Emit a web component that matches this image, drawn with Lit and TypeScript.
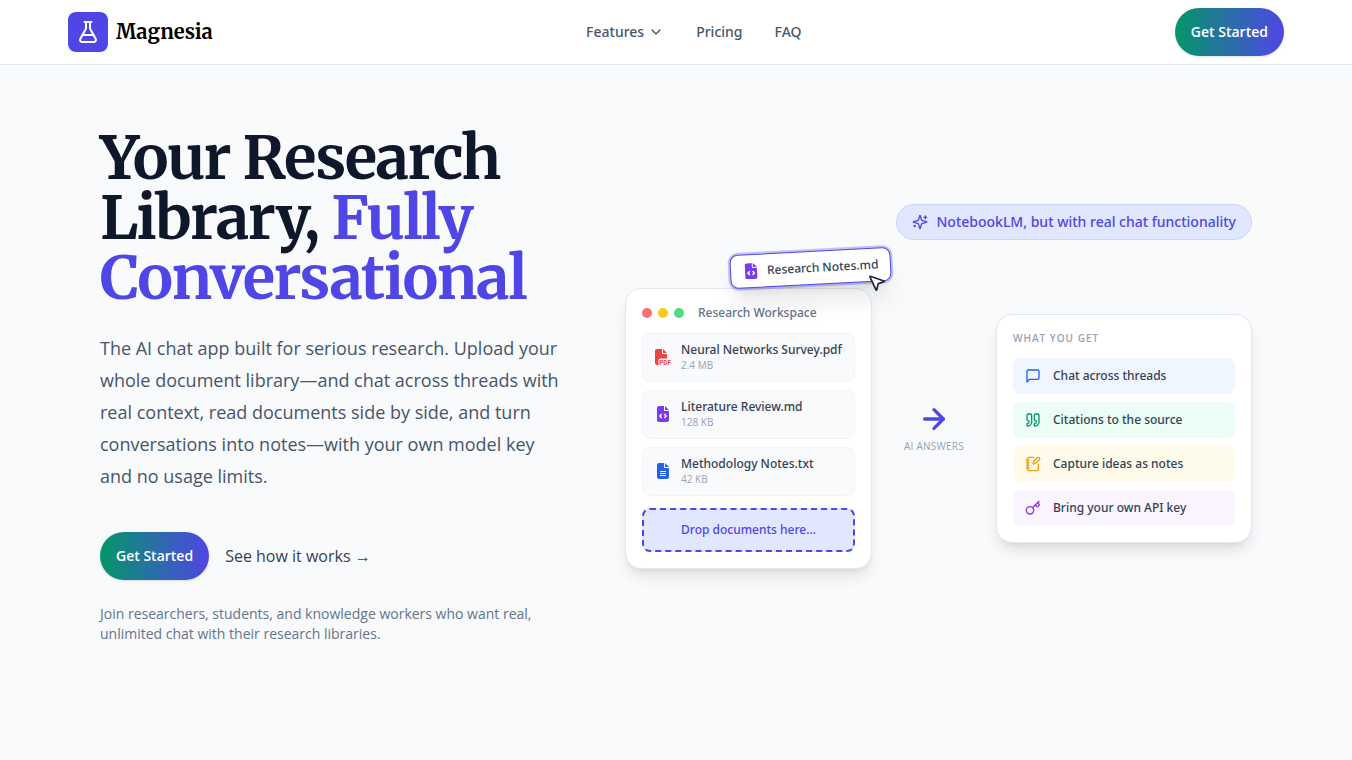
import { LitElement, html, svg, css } from "lit";
import { customElement } from "lit/decorators.js";

const stroke = (body: unknown, cls = "") => html`
  <svg class="icon ${cls}" viewBox="0 0 24 24" fill="none" stroke="currentColor" stroke-width="2"
    stroke-linecap="round" stroke-linejoin="round" aria-hidden="true">${body}</svg>`;

const flask = svg`<path d="M14 2v6a2 2 0 0 0 .245.96l5.51 10.08A2 2 0 0 1 18 22H6a2 2 0 0 1-1.755-2.96l5.51-10.08A2 2 0 0 0 10 8V2"/><path d="M6.453 15h11.094"/><path d="M8.5 2h7"/>`;
const chevron = svg`<path d="m6 9 6 6 6-6"/>`;
const sparkles = svg`<path d="M9.937 15.5A2 2 0 0 0 8.5 14.063l-6.135-1.582a.5.5 0 0 1 0-.962L8.5 9.936A2 2 0 0 0 9.937 8.5l1.582-6.135a.5.5 0 0 1 .963 0L14.063 8.5A2 2 0 0 0 15.5 9.937l6.135 1.581a.5.5 0 0 1 0 .964L15.5 14.063a2 2 0 0 0-1.437 1.437l-1.582 6.135a.5.5 0 0 1-.963 0z"/><path d="M20 3v4"/><path d="M22 5h-4"/><path d="M4 17v2"/><path d="M5 18H3"/>`;
const message = svg`<path d="M21 15a2 2 0 0 1-2 2H7l-4 4V5a2 2 0 0 1 2-2h14a2 2 0 0 1 2 2z"/>`;
const quote = svg`<path d="M16 3a2 2 0 0 0-2 2v6a2 2 0 0 0 2 2 1 1 0 0 1 1 1v1a2 2 0 0 1-2 2 1 1 0 0 0-1 1v2a1 1 0 0 0 1 1 6 6 0 0 0 6-6V5a2 2 0 0 0-2-2z"/><path d="M5 3a2 2 0 0 0-2 2v6a2 2 0 0 0 2 2 1 1 0 0 1 1 1v1a2 2 0 0 1-2 2 1 1 0 0 0-1 1v2a1 1 0 0 0 1 1 6 6 0 0 0 6-6V5a2 2 0 0 0-2-2z"/>`;
const notebook = svg`<path d="M13.4 2H6a2 2 0 0 0-2 2v16a2 2 0 0 0 2 2h12a2 2 0 0 0 2-2v-7.4"/><path d="M2 6h4"/><path d="M2 10h4"/><path d="M2 14h4"/><path d="M2 18h4"/><path d="M21.378 5.626a1 1 0 1 0-3.004-3.004l-5.01 5.012a2 2 0 0 0-.506.854l-.837 2.87a.5.5 0 0 0 .62.62l2.87-.837a2 2 0 0 0 .854-.506z"/>`;
const key = svg`<path d="m15.5 7.5 2.3 2.3a1 1 0 0 0 1.4 0l2.1-2.1a1 1 0 0 0 0-1.4L19 4"/><path d="m21 2-9.6 9.6"/><circle cx="7.5" cy="15.5" r="5.5"/>`;
const arrow = svg`<path d="M5 12h14"/><path d="m12 5 7 7-7 7"/>`;
const pointer = svg`<path d="M4.037 4.688a.495.495 0 0 1 .651-.651l16 6.5a.5.5 0 0 1-.063.947l-6.124 1.58a2 2 0 0 0-1.438 1.435l-1.579 6.126a.5.5 0 0 1-.947.063z"/>`;

const filePdf = html`<svg class="icon pdf" viewBox="0 0 512 512" fill="currentColor" aria-hidden="true">
  <path d="M0 64C0 28.7 28.7 0 64 0h160v128c0 17.7 14.3 32 32 32h128v144H176c-35.3 0-64 28.7-64 64v144H64c-35.3 0-64-28.7-64-64zM384 128H256V0z"/>
  <text class="pdf-mark" x="136" y="506">PDF</text></svg>`;
const PAGE = "M64 0C28.7 0 0 28.7 0 64v384c0 35.3 28.7 64 64 64h256c35.3 0 64-28.7 64-64V160H256c-17.7 0-32-14.3-32-32V0zM256 0v128h128z";
const fileCode = html`<svg class="icon md" viewBox="0 0 384 512" fill="currentColor" aria-hidden="true">
  <path fill-rule="evenodd" d="${PAGE}M153 289l-31 31 31 31c9.400 9.400 9.400 24.600 0 33.900s-24.600 9.400-33.900 0L71 337c-9.400-9.400-9.400-24.600 0-33.900l48-48c9.400-9.400 24.600-9.400 33.900 0s9.400 24.600 0 33.900zM265 255l48 48c9.400 9.400 9.400 24.600 0 33.900l-48 48c-9.400 9.400-24.600 9.400-33.900 0s-9.400-24.600 0-33.900l31-31-31-31c-9.400-9.400-9.400-24.600 0-33.900s24.600-9.400 33.900 0z"/></svg>`;
const fileLines = html`<svg class="icon txt" viewBox="0 0 384 512" fill="currentColor" aria-hidden="true">
  <path fill-rule="evenodd" d="${PAGE}M112 256h160c8.800 0 16 7.200 16 16s-7.200 16-16 16H112c-8.800 0-16-7.200-16-16s7.200-16 16-16zm0 64h160c8.800 0 16 7.200 16 16s-7.200 16-16 16H112c-8.800 0-16-7.200-16-16s7.200-16 16-16zm0 64h160c8.800 0 16 7.200 16 16s-7.200 16-16 16H112c-8.800 0-16-7.200-16-16s7.200-16 16-16z"/></svg>`;

const files = [
  { icon: filePdf, name: "Neural Networks Survey.pdf", size: "2.4 MB" },
  { icon: fileCode, name: "Literature Review.md", size: "128 KB" },
  { icon: fileLines, name: "Methodology Notes.txt", size: "42 KB" },
];

const benefits = [
  { icon: message, tone: "blue", text: "Chat across threads" },
  { icon: quote, tone: "green", text: "Citations to the source" },
  { icon: notebook, tone: "amber", text: "Capture ideas as notes" },
  { icon: key, tone: "purple", text: "Bring your own API key" },
];

@customElement("app-root")
export class AppRoot extends LitElement {
  static styles = css`
    :host {
      --medium: "Noto Sans", "Open Sans", sans-serif;
      display: block;
      min-height: 100vh;
      background: #f8fafc;
      color: #0f172a;
      font-family: "Open Sans", "Noto Sans", sans-serif;
      font-size: 16px;
      line-height: 24px;
    }
    * { box-sizing: border-box; margin: 0; }
    a { color: inherit; text-decoration: none; }
    ul { list-style: none; padding: 0; }
    .icon { display: block; width: 16px; height: 16px; flex: none; }

    .header { margin-bottom: -1px; background: #fff; border-bottom: 1px solid #e2e8f0; }
    .bar {
      display: flex; align-items: center; justify-content: space-between;
      max-width: 1280px; height: 64px; margin: 0 auto; padding: 0 32px;
    }
    .brand { display: flex; align-items: center; gap: 8px; color: #000; }
    .logo {
      display: grid; place-items: center; width: 40px; height: 40px;
      border-radius: 8px; background: #4f46e5; color: #fff;
    }
    .logo .icon { width: 24px; height: 24px; }
    .brand-name { font: 700 20px/28px "Merriweather", "Liberation Serif", serif; }
    .nav {
      display: flex; align-items: center; gap: 32px;
      font: 500 14px/20px var(--medium); color: #475569;
    }
    .menu {
      display: flex; align-items: center; gap: 4px; padding: 0; border: 0;
      background: none; color: inherit; font: inherit; cursor: pointer;
    }
    .cta {
      display: inline-flex; align-items: center; height: 48px; padding: 0 16px;
      border-radius: 24px; color: #fff; white-space: nowrap;
      background: linear-gradient(to right, #059669, #4f46e5);
      box-shadow: 0 1px 3px rgba(0, 0, 0, 0.1), 0 1px 2px -1px rgba(0, 0, 0, 0.1);
      font-size: 14px; font-weight: 600; line-height: 20px;
    }

    .hero {
      display: grid; grid-template-columns: minmax(0, 25fr) minmax(0, 34fr);
      align-items: center; gap: 64px;
      max-width: 1216px; margin: 0 auto; padding: 64px 32px;
    }
    .title {
      font: 700 60px/60px "Merriweather", "Liberation Serif", serif;
      letter-spacing: -0.025em;
    }
    .accent { color: #4f46e5; }
    .lead { margin-top: 24px; font-size: 18px; line-height: 32px; color: #475569; }
    .actions { display: flex; align-items: center; gap: 16px; margin-top: 40px; }
    .more { color: #334155; }
    .note { margin-top: 24px; font-size: 14px; line-height: 20px; color: #64748b; }

    .demo { display: flex; flex-direction: column; gap: 48px; }
    .pill {
      display: flex; align-items: center; gap: 8px; align-self: flex-end;
      padding: 7px 15px; border: 1px solid #cdd5fb; border-radius: 18px;
      background: #e0e7ff; color: #4f46e5; font: 500 14px/20px var(--medium);
    }
    .flow {
      display: grid; grid-template-columns: minmax(0, 1fr) auto 256px;
      align-items: center; gap: 32px;
    }
    .card {
      position: relative; padding: 16px; background: #fff;
      border: 1px solid #e2e8f0; border-radius: 16px;
      box-shadow: 0 10px 15px -3px rgba(0, 0, 0, 0.1), 0 4px 6px -4px rgba(0, 0, 0, 0.1);
      font: 500 12px/16px var(--medium);
    }
    .card-bar { display: flex; align-items: center; gap: 6px; margin-bottom: 12px; }
    .dot { width: 10px; height: 10px; border-radius: 50%; }
    .red { background: #f87171; }
    .yellow { background: #facc15; }
    .lime { background: #4ade80; }
    .card-title { margin-left: 8px; color: #64748b; }
    .files { display: grid; gap: 8px; }
    .file {
      display: flex; align-items: center; gap: 10px; padding: 8px 12px;
      border: 1px solid #f1f5f9; border-radius: 8px; background: #f8fafc;
    }
    .file-name { color: #334155; white-space: nowrap; }
    .file-size { font: 400 10px/15px "Open Sans", sans-serif; color: #94a3b8; }
    .pdf { color: #ef4444; overflow: visible; }
    .pdf-mark { font: 700 205px "Roboto", sans-serif; }
    .md { color: #7c3aed; }
    .txt { color: #2563eb; }
    .drop {
      margin-top: 12px; padding: 12px; border: 2px dashed #4f46e5; border-radius: 8px;
      background: #e0e7ff; color: #4f46e5; text-align: center;
    }
    .chip {
      position: absolute; top: -38px; right: -20px; display: flex; align-items: center; gap: 8px;
      padding: 8px 12px; border: 1px solid #4f46e5; border-radius: 8px; background: #fff;
      box-shadow: 0 0 0 2px rgba(79, 70, 229, 0.3), 0 20px 25px -5px rgba(0, 0, 0, 0.1), 0 8px 10px -6px rgba(0, 0, 0, 0.1);
      color: #334155; white-space: nowrap; transform: rotate(-3deg);
    }
    .pointer { position: absolute; right: 4px; bottom: -12px; width: 20px; height: 20px; fill: #fff; color: #1e293b; }

    .link { display: flex; flex-direction: column; align-items: center; gap: 4px; }
    .arrow { width: 32px; height: 32px; color: #4f46e5; stroke-width: 2.5; }
    .link-text { font-size: 10px; line-height: 15px; font-weight: 500; letter-spacing: 0.025em; color: #94a3b8; }
    .label {
      margin-bottom: 12px; font: 600 10px/15px "Open Sans", sans-serif;
      letter-spacing: 0.1em; color: #94a3b8;
    }
    .benefits { display: grid; gap: 8px; }
    .benefit {
      display: flex; align-items: center; gap: 12px; padding: 10px 12px;
      border-radius: 8px;
    }
    .benefit-text { color: #334155; }
    .blue { background: #eff6ff; color: #2563eb; }
    .green { background: #ecfdf5; color: #059669; }
    .amber { background: #fffbeb; color: #f59e0b; }
    .purple { background: #faf5ff; color: #9333ea; }

    @media (max-width: 1100px) {
      .hero { grid-template-columns: minmax(0, 1fr); }
    }
  `;

  render() {
    return html`
      <header class="header">
        <div class="bar">
          <a class="brand" href="#">
            <span class="logo">${stroke(flask)}</span>
            <span class="brand-name">Magnesia</span>
          </a>
          <nav class="nav">
            <button class="menu" type="button">Features ${stroke(chevron)}</button>
            <a href="#pricing">Pricing</a>
            <a href="#faq">FAQ</a>
          </nav>
          <a class="cta" href="#start">Get Started</a>
        </div>
      </header>
      <main class="hero">
        <section>
          <h1 class="title">Your Research Library, <span class="accent">Fully Conversational</span></h1>
          <p class="lead">The AI chat app built for serious research. Upload your whole document library—and chat across threads with real context, read documents side by side, and turn conversations into notes—with your own model key and no usage limits.</p>
          <div class="actions">
            <a class="cta" href="#start">Get Started</a>
            <a class="more" href="#how">See how it works →</a>
          </div>
          <p class="note">Join researchers, students, and knowledge workers who want real, unlimited chat with their research libraries.</p>
        </section>
        <section class="demo">
          <p class="pill">${stroke(sparkles)}<span>NotebookLM, but with real chat functionality</span></p>
          <div class="flow">
            <div class="card">
              <div class="card-bar">
                <span class="dot red"></span><span class="dot yellow"></span><span class="dot lime"></span>
                <span class="card-title">Research Workspace</span>
              </div>
              <ul class="files">
                ${files.map((f) => html`<li class="file">${f.icon}
                  <div><p class="file-name">${f.name}</p><p class="file-size">${f.size}</p></div></li>`)}
              </ul>
              <div class="drop">Drop documents here...</div>
              <div class="chip">${fileCode}<span>Research Notes.md</span>${stroke(pointer, "pointer")}</div>
            </div>
            <div class="link">${stroke(arrow, "arrow")}<span class="link-text">AI ANSWERS</span></div>
            <div class="card">
              <h2 class="label">WHAT YOU GET</h2>
              <ul class="benefits">
                ${benefits.map((b) => html`<li class="benefit ${b.tone}">${stroke(b.icon)}<span class="benefit-text">${b.text}</span></li>`)}
              </ul>
            </div>
          </div>
        </section>
      </main>
    `;
  }
}
